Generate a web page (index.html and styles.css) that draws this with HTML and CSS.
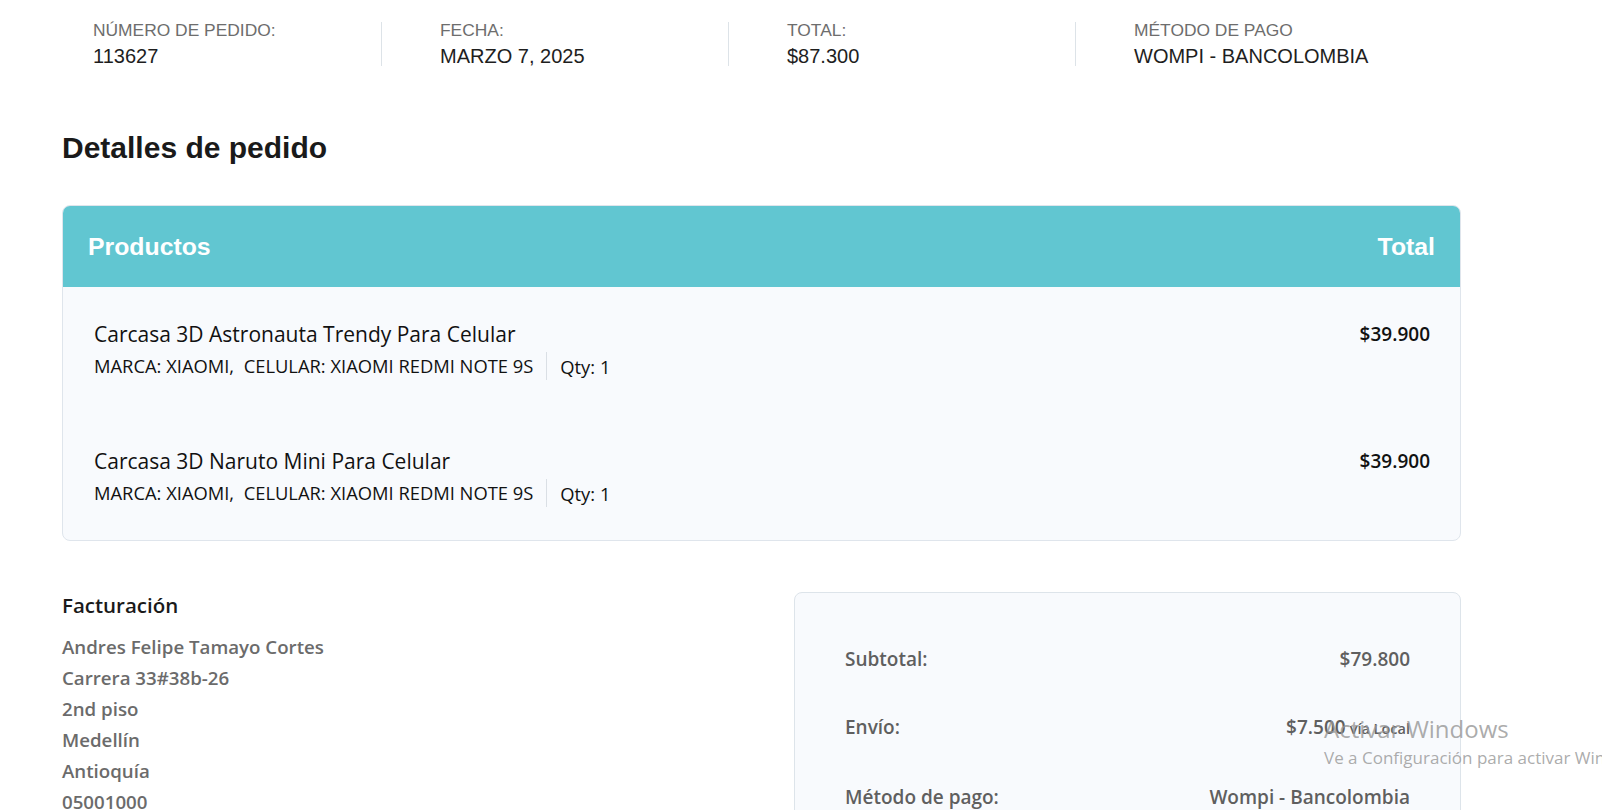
FILE: index.html
```html
<!DOCTYPE html>
<html lang="es">
<head>
<meta charset="utf-8">
<title>Pedido 113627</title>
<link rel="stylesheet" href="styles.css">
</head>
<body>
<main class="page">
  <ul class="order-overview">
    <li class="ov-item">
      <span class="ov-label">NÚMERO DE PEDIDO:</span>
      <strong class="ov-value">113627</strong>
    </li>
    <li class="ov-item">
      <span class="ov-label">FECHA:</span>
      <strong class="ov-value">MARZO 7, 2025</strong>
    </li>
    <li class="ov-item">
      <span class="ov-label">TOTAL:</span>
      <strong class="ov-value">$87.300</strong>
    </li>
    <li class="ov-item">
      <span class="ov-label">MÉTODO DE PAGO</span>
      <strong class="ov-value">WOMPI - BANCOLOMBIA</strong>
    </li>
  </ul>

  <h2 class="section-title">Detalles de pedido</h2>

  <section class="products">
    <div class="products-head">
      <span>Productos</span>
      <span>Total</span>
    </div>
    <div class="products-body">
      <div class="product">
        <div class="product-info">
          <div class="product-name">Carcasa 3D Astronauta Trendy Para Celular</div>
          <div class="product-meta">
            <span class="attrs">MARCA: XIAOMI,&nbsp; CELULAR: XIAOMI REDMI NOTE 9S</span>
            <span class="qty">Qty: 1</span>
          </div>
        </div>
        <div class="product-price">$39.900</div>
      </div>
      <div class="product">
        <div class="product-info">
          <div class="product-name">Carcasa 3D Naruto Mini Para Celular</div>
          <div class="product-meta">
            <span class="attrs">MARCA: XIAOMI,&nbsp; CELULAR: XIAOMI REDMI NOTE 9S</span>
            <span class="qty">Qty: 1</span>
          </div>
        </div>
        <div class="product-price">$39.900</div>
      </div>
    </div>
  </section>

  <div class="bottom">
    <div class="billing">
      <h3 class="billing-title">Facturación</h3>
      <address class="billing-addr">
        <span>Andres Felipe Tamayo Cortes</span>
        <span>Carrera 33#38b-26</span>
        <span>2nd piso</span>
        <span>Medellín</span>
        <span>Antioquía</span>
        <span>05001000</span>
      </address>
    </div>
    <div class="summary">
      <div class="sum-row">
        <span>Subtotal:</span>
        <span>$79.800</span>
      </div>
      <div class="sum-row">
        <span>Envío:</span>
        <span>$7.500<small class="via">vía Local</small></span>
      </div>
      <div class="sum-row">
        <span>Método de pago:</span>
        <span>Wompi - Bancolombia</span>
      </div>
    </div>
  </div>
</main>
<div class="watermark">
  <div class="wm-title">Activar Windows</div>
  <div class="wm-sub">Ve a Configuración para activar Windows.</div>
</div>
</body>
</html>
```
FILE: styles.css
```css
* { box-sizing: border-box; }
html, body { margin: 0; padding: 0; }
body {
  background: #ffffff;
  font-family: "Open Sans", "Noto Sans", sans-serif;
  color: #222;
  overflow: hidden;
  height: 810px;
  position: relative;
}
.page {
  width: 1399px;
  margin-left: 62px;
  padding-top: 22px;
}
.order-overview {
  list-style: none;
  margin: 0;
  padding: 0 0 0 31px;
  display: flex;
  font-family: "Liberation Sans", Arial, sans-serif;
}
.ov-item {
  display: flex;
  flex-direction: column;
  height: 44px;
  width: 347px;
  padding-left: 58px;
  border-left: 1px solid #dde3e8;
}
.ov-item:first-child {
  width: 288px;
  padding-left: 0;
  border-left: 0;
}
.ov-label {
  font-size: 17.4px;
  line-height: 18px;
  color: #6d6d6d;
  margin-top: -1px;
}
.ov-value {
  font-weight: normal;
  font-size: 20px;
  line-height: 24px;
  margin-top: 5px;
  color: #1e1e1e;
}
.section-title {
  font-family: "Liberation Sans", Arial, sans-serif;
  font-size: 30px;
  line-height: 36px;
  font-weight: bold;
  color: #1a1a1a;
  margin: 64px 0 39px;
}
.products {
  border: 1px solid #dfe5ec;
  border-radius: 8px;
  overflow: hidden;
  background: #f8fafd;
}
.products-head {
  display: flex;
  justify-content: space-between;
  align-items: center;
  height: 81px;
  padding: 0 25px;
  background: #61c6d1;
  color: #fff;
  font-family: "Liberation Sans", Arial, sans-serif;
  font-weight: bold;
  font-size: 24.8px;
}
.products-body {
  padding: 22px 30px 21px 31px;
}
.product {
  display: flex;
  justify-content: space-between;
  align-items: flex-start;
  height: 127px;
  padding-top: 12px;
}
.product:last-child { height: 83px; }
.product-name {
  font-size: 21px;
  line-height: 26px;
  color: #111;
}
.product-meta {
  display: flex;
  align-items: center;
  margin-top: 5px;
  font-size: 18.35px;
  color: #111;
}
.attrs {
  padding-right: 13px;
  border-right: 1px solid #dadfe5;
  line-height: 28px;
}
.qty { padding-left: 13px; }
.product-price {
  font-size: 19px;
  font-weight: 600;
  line-height: 26px;
  color: #111;
}
.bottom {
  display: grid;
  grid-template-columns: 1fr 667px;
  margin-top: 51px;
}
.billing-title {
  margin: 0;
  font-size: 20.5px;
  font-weight: 600;
  line-height: 26px;
  color: #1a1a1a;
}
.billing-addr {
  font-style: normal;
  display: flex;
  flex-direction: column;
  margin-top: 13px;
  font-size: 18.7px;
  font-weight: 600;
  line-height: 31px;
  color: #6b6b6b;
}
.summary {
  border: 1px solid #dde4ea;
  border-radius: 8px;
  background: #f8fafd;
  padding: 52px 50px 40px;
  height: 260px;
}
.sum-row {
  display: flex;
  justify-content: space-between;
  align-items: baseline;
  font-size: 19px;
  font-weight: 600;
  color: #5f5f5f;
  line-height: 28px;
  margin-bottom: 40px;
}
.via {
  font-size: 14.5px;
  margin-left: 4px;
}
.watermark {
  position: absolute;
  left: 1324px;
  top: 714px;
  color: rgba(150, 150, 150, 0.8);
  font-family: "Open Sans", sans-serif;
  white-space: nowrap;
  pointer-events: none;
}
.wm-title {
  font-size: 24px;
  line-height: 30px;
}
.wm-sub {
  font-size: 17px;
  line-height: 28px;
}
```
